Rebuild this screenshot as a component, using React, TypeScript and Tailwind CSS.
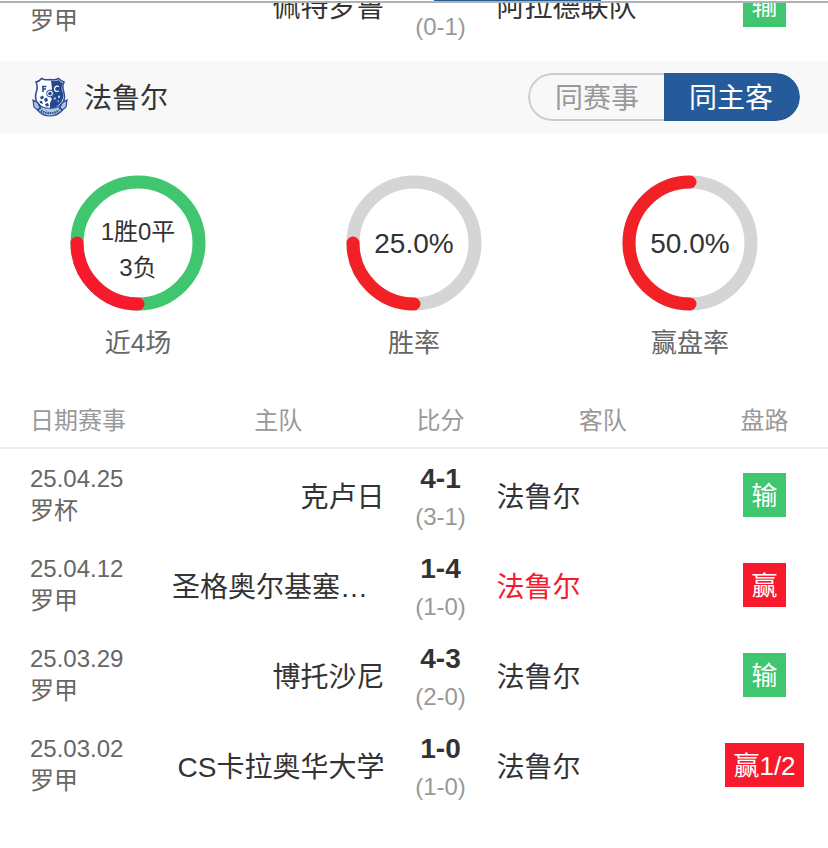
import { useState } from 'react'
import clsx from 'clsx'

interface Match {
  id: string
  date?: string
  league: string
  home: string
  away: string
  score?: string
  half: string
  result: string
  awayWin?: boolean
}

const previousMatches: Match[] = [
  { id: 'p1', league: '罗甲', home: '佩特罗鲁', away: '阿拉德联队', half: '(0-1)', result: '输' },
]

const matches: Match[] = [
  { id: 'm1', date: '25.04.25', league: '罗杯', home: '克卢日', away: '法鲁尔', score: '4-1', half: '(3-1)', result: '输' },
  { id: 'm2', date: '25.04.12', league: '罗甲', home: '圣格奥尔基塞普西', away: '法鲁尔', score: '1-4', half: '(1-0)', result: '赢', awayWin: true },
  { id: 'm3', date: '25.03.29', league: '罗甲', home: '博托沙尼', away: '法鲁尔', score: '4-3', half: '(2-0)', result: '输' },
  { id: 'm4', date: '25.03.02', league: '罗甲', home: 'CS卡拉奥华大学', away: '法鲁尔', score: '1-0', half: '(1-0)', result: '赢1/2' },
]

function ColumnWidths() {
  return (
    <colgroup>
      <col className="w-[172px]" />
      <col />
      <col className="w-[112px]" />
      <col />
      <col className="w-[119px]" />
    </colgroup>
  )
}

function MatchRow({ match }: { match: Match }) {
  return (
    <tr className="h-[90px]">
      <td className="pt-0.5 pl-[30px] text-2xl leading-8 text-[#666]">
        <div className="min-h-8">{match.date}</div>
        <div>{match.league}</div>
      </td>
      <td className="pt-2 text-right text-[28px] leading-10 text-[#333]">
        <div className="truncate">{match.home}</div>
      </td>
      <td className="pt-1.5 text-center">
        <div className="min-h-10 text-[28px] leading-10 font-bold text-[#333]">{match.score}</div>
        <div className="text-2xl leading-9 text-[#999]">{match.half}</div>
      </td>
      <td className={clsx('pt-2 text-[28px] leading-10', match.awayWin ? 'text-[#f8192c]' : 'text-[#333]')}>
        <div className="truncate">{match.away}</div>
      </td>
      <td className="pt-0.5 pr-2 text-center">
        <span
          className={clsx(
            'inline-block px-2 pt-0.5 align-middle text-[26px] leading-[42px] text-white',
            match.result.startsWith('赢') ? 'bg-[#f8192c]' : 'bg-[#40c66e]',
          )}
        >
          {match.result}
        </span>
      </td>
    </tr>
  )
}

interface RingProps {
  percent: number
  label: string
  track: string
  color: string
  lines: string[]
}

function Ring({ percent, label, track, color, lines }: RingProps) {
  const multi = lines.length > 1
  return (
    <div className="flex flex-col items-center gap-3">
      <div className="grid place-items-center">
        <svg viewBox="0 0 136 136" className="col-start-1 row-start-1 size-[136px]" fill="none" strokeWidth="13">
          <circle cx="68" cy="68" r="61" stroke={track} />
          <circle
            cx="68"
            cy="68"
            r="61"
            stroke={color}
            strokeLinecap="round"
            pathLength="100"
            strokeDasharray={`${percent} 100`}
            transform="rotate(90 68 68)"
          />
        </svg>
        <div
          className={clsx(
            'col-start-1 row-start-1 text-center text-[#333]',
            multi ? 'pt-3.5 text-2xl leading-9' : 'pt-0.5 text-[28px] leading-10',
          )}
        >
          {lines.map((line) => (
            <div key={line}>{line}</div>
          ))}
        </div>
      </div>
      <div className="text-[26px] leading-10 text-[#666]">{label}</div>
    </div>
  )
}

function Crest() {
  return (
    <svg viewBox="0 0 36 40" className="h-10 w-9" role="img" aria-label="法鲁尔">
      <path
        d="M4 5C7 4.500 8.500 3 9.500 1.500C12 3 15 3 18 2.500C21 3 24 3 26.500 1.500C28 3 30 4.500 32 5C30 9 30.500 12 32 16C34 24 29 31 18 36C7 31 2 24 4 16C5.500 12 6 9 4 5Z"
        fill="#fff"
        stroke="#2f4f93"
        strokeWidth="1.600"
      />
      <path d="M19 3.500C22 4 25 4 26.500 3C28 4.500 29.500 5.500 31 6C29 10 29.500 13 31 16C32.500 23 28 29 18 33V26L20 22L16 17L20 12Z" fill="#24488f" />
      <path d="M11 9V15M10 9.500H14.500M11 12H14" fill="none" stroke="#24488f" strokeWidth="1.600" />
      <path d="M27 9.500C24 8.500 22.500 10 22.500 12S24 15 27 14" fill="none" stroke="#fff" strokeWidth="1.300" />
      <circle cx="18" cy="16.500" r="3.400" fill="#fff" stroke="#2f4f93" strokeWidth="1" />
      <path d="M18 14.500L20 16L19.200 18.300H16.800L16 16Z" fill="#24488f" />
      <path d="M8 20L11 18.500L12 21L9 22.500ZM12 22L15 20.500L16 24L13 25ZM7.500 24L10 24L11 27L8 26ZM13 27L16 26L17 29L14 29.500Z" fill="#24488f" />
      <path d="M21.500 21L23.500 20L24 22L22 23ZM26 19L28 18.500L28 21L26 21ZM25 24L27 23L26.500 25.500Z" fill="#b9c8e4" />
      <path d="M1 23L6 26C10 33 26 33 30 26L35 23L34 30L30.500 33C24 41 12 41 5.500 33L2 30Z" fill="#b4c3e1" stroke="#2f4f93" strokeWidth="1.200" />
      <path d="M6 26L8.500 31L5.500 33M30 26L27.500 31L30.500 33" fill="none" stroke="#24488f" strokeWidth="1.600" />
      <path d="M9 33.500C14 37 22 37 27 33.500" fill="none" stroke="#2f4f93" strokeWidth="2.200" strokeDasharray="1.500 0.800" />
    </svg>
  )
}

const filters = ['同赛事', '同主客']

export default function App() {
  const [active, setActive] = useState('同主客')

  return (
    <main className="min-h-screen bg-white font-['Liberation_Sans','Noto_Sans_CJK_SC',sans-serif]">
      <div className="flex h-[3px] flex-col">
        <div className="ml-[434px] h-px w-[167px] bg-[#265b9b]" />
        <div className="mt-auto h-0.5 bg-[#adb3b1]" />
      </div>

      <section className="flex h-[58px] flex-col justify-end overflow-hidden pb-3">
        <table className="w-full shrink-0 table-fixed">
          <ColumnWidths />
          <tbody>
            {previousMatches.map((match) => (
              <MatchRow key={match.id} match={match} />
            ))}
          </tbody>
        </table>
      </section>

      <header className="flex h-[72px] items-center justify-between bg-[#f8f8f8] pr-7 pl-8">
        <div className="flex items-center gap-4">
          <Crest />
          <h2 className="pt-1 text-[28px] leading-10 text-[#333]">法鲁尔</h2>
        </div>
        <div className="flex h-12 w-[272px] overflow-hidden rounded-full">
          {filters.map((filter) => (
            <button
              key={filter}
              type="button"
              aria-pressed={active === filter}
              onClick={() => setActive(filter)}
              className={clsx(
                'flex-1 border-2 pt-1 text-[28px] leading-10 first:rounded-l-full first:border-r-0 last:rounded-r-full last:border-l-0',
                active === filter ? 'border-[#265b9b] bg-[#265b9b] text-white' : 'border-[#ccc] text-[#999]',
              )}
            >
              {filter}
            </button>
          ))}
        </div>
      </header>

      <section className="grid grid-cols-3 pt-[42px]">
        <Ring percent={25} label="近4场" track="#40c66e" color="#f8192c" lines={['1胜0平', '3负']} />
        <Ring percent={25} label="胜率" track="#d5d5d5" color="#f12126" lines={['25.0%']} />
        <Ring percent={50} label="赢盘率" track="#d5d5d5" color="#f12126" lines={['50.0%']} />
      </section>

      <table className="mt-8 w-full table-fixed border-separate border-spacing-0">
        <ColumnWidths />
        <thead>
          <tr className="h-[54px] text-2xl text-[#999]">
            <th className="border-b-2 border-[#eee] pl-[30px] text-left font-normal">日期赛事</th>
            <th className="border-b-2 border-[#eee] font-normal">主队</th>
            <th className="border-b-2 border-[#eee] font-normal">比分</th>
            <th className="border-b-2 border-[#eee] font-normal">客队</th>
            <th className="border-b-2 border-[#eee] pr-2 font-normal">盘路</th>
          </tr>
        </thead>
        <tbody>
          {matches.map((match) => (
            <MatchRow key={match.id} match={match} />
          ))}
        </tbody>
      </table>
    </main>
  )
}
